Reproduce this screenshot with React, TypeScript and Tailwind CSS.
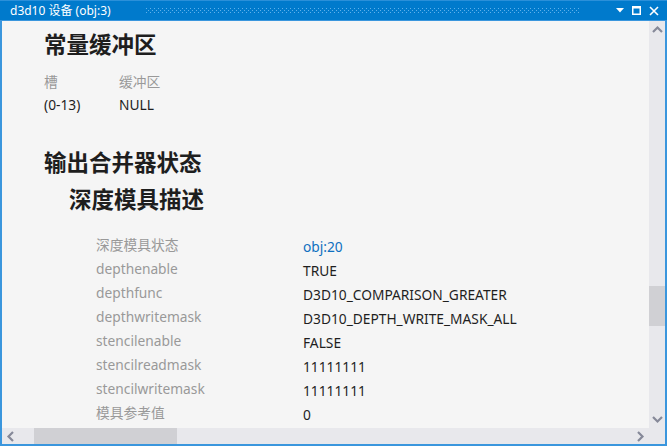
import React from "react";

const rows: { label: string; value: string; link?: boolean }[] = [
  { label: "深度模具状态", value: "obj:20", link: true },
  { label: "depthenable", value: "TRUE" },
  { label: "depthfunc", value: "D3D10_COMPARISON_GREATER" },
  { label: "depthwritemask", value: "D3D10_DEPTH_WRITE_MASK_ALL" },
  { label: "stencilenable", value: "FALSE" },
  { label: "stencilreadmask", value: "11111111" },
  { label: "stencilwritemask", value: "11111111" },
  { label: "模具参考值", value: "0" },
];

function Chevron({ dir }: { dir: "up" | "down" | "left" | "right" }) {
  const pts =
    dir === "up"
      ? "1,7 5.5,2.5 10,7"
      : dir === "down"
      ? "1,3 5.5,7.5 10,3"
      : dir === "left"
      ? "7,1 2.5,5.5 7,10"
      : "3,1 7.5,5.5 3,10";
  return (
    <svg width="11" height="11" viewBox="0 0 11 11">
      <polyline points={pts} fill="none" stroke="#868999" strokeWidth="2.2" />
    </svg>
  );
}

export default function App() {
  return (
    <div className="w-[667px] h-[446px] flex flex-col bg-[#3a96dd] overflow-hidden font-['Noto_Sans','Noto_Sans_CJK_SC',sans-serif]">
      {/* title bar */}
      <div className="h-[20px] shrink-0 bg-[#007acc] flex items-center text-white border-t border-[#2b90d9]">
        <div className="pl-[10px] text-[12px] leading-none whitespace-nowrap w-[146px]">
          d3d10 设备 (obj:3)
        </div>
        <div className="flex-1 h-[6px] mr-[36px]">
          <svg width="100%" height="6">
            <defs>
              <pattern id="grip" width="4" height="4" patternUnits="userSpaceOnUse">
                <rect x="0" y="0" width="1" height="1" fill="#5fb0ea" />
                <rect x="2" y="2" width="1" height="1" fill="#5fb0ea" />
              </pattern>
            </defs>
            <rect x="0" y="0" width="100%" height="6" fill="url(#grip)" />
          </svg>
        </div>
        <div className="flex items-center gap-[8px] pr-[8px]">
          <svg width="8" height="5" viewBox="0 0 8 5">
            <polygon points="0,0 8,0 4,4.5" fill="white" />
          </svg>
          <svg width="9" height="9" viewBox="0 0 9 9">
            <rect x="0.75" y="0.75" width="7.5" height="7.5" fill="none" stroke="white" strokeWidth="1.5" />
            <rect x="0" y="0" width="9" height="2.5" fill="white" />
          </svg>
          <svg width="10" height="10" viewBox="0 0 10 10">
            <path d="M1 1 L9 9 M9 1 L1 9" stroke="white" strokeWidth="1.6" />
          </svg>
        </div>
      </div>

      {/* body */}
      <div className="flex-1 min-h-0 flex flex-col mx-[2px] mb-[2px] mt-[1px]">
        <div className="flex-1 min-h-0 flex">
          <div className="flex-1 min-w-0 bg-[#f5f5f5] overflow-hidden pl-[42px] pt-[9px] text-[#1e1e1e]">
            <div className="text-[22.5px] font-bold leading-[30px]">常量缓冲区</div>
            <div className="mt-[11px] text-[13.75px]">
              <div className="flex h-[23px] items-center text-[#999999]">
                <div className="w-[75px]">槽</div>
                <div>缓冲区</div>
              </div>
              <div className="flex h-[23px] items-center">
                <div className="w-[75px]">(0-13)</div>
                <div>NULL</div>
              </div>
            </div>
            <div className="mt-[31px] text-[22.5px] font-bold leading-[30px]">输出合并器状态</div>
            <div className="mt-[7px] pl-[25px] text-[22.5px] font-bold leading-[30px]">深度模具描述</div>
            <div className="mt-[20px] pl-[52px] text-[13.75px]">
              {rows.map((r) => (
                <div key={r.label} className="flex h-[24px] items-center">
                  <div className="w-[207px] text-[#999999] -mt-[4px]">{r.label}</div>
                  <div className={r.link ? "text-[#0e70c0]" : "text-[#1e1e1e]"}>{r.value}</div>
                </div>
              ))}
            </div>
          </div>
          {/* vertical scrollbar */}
          <div className="w-[16px] shrink-0 bg-[#e8e8ec] flex flex-col">
            <div className="h-[18px] flex items-center justify-center">
              <Chevron dir="up" />
            </div>
            <div className="flex-1 flex flex-col">
              <div className="h-[247px]" />
              <div className="h-[40px] bg-[#d0d0d4]" />
            </div>
            <div className="h-[18px] flex items-center justify-center">
              <Chevron dir="down" />
            </div>
          </div>
        </div>
        {/* horizontal scrollbar */}
        <div className="h-[16px] shrink-0 flex bg-[#e8e8ec]">
          <div className="flex-1 flex items-center">
            <div className="w-[18px] h-full flex items-center justify-center">
              <Chevron dir="left" />
            </div>
            <div className="flex-1 h-full flex">
              <div className="w-[14px]" />
              <div className="w-[143px] h-full bg-[#d0d0d4]" />
            </div>
            <div className="w-[18px] h-full flex items-center justify-center">
              <Chevron dir="right" />
            </div>
          </div>
          <div className="w-[16px]" />
        </div>
      </div>
    </div>
  );
}
